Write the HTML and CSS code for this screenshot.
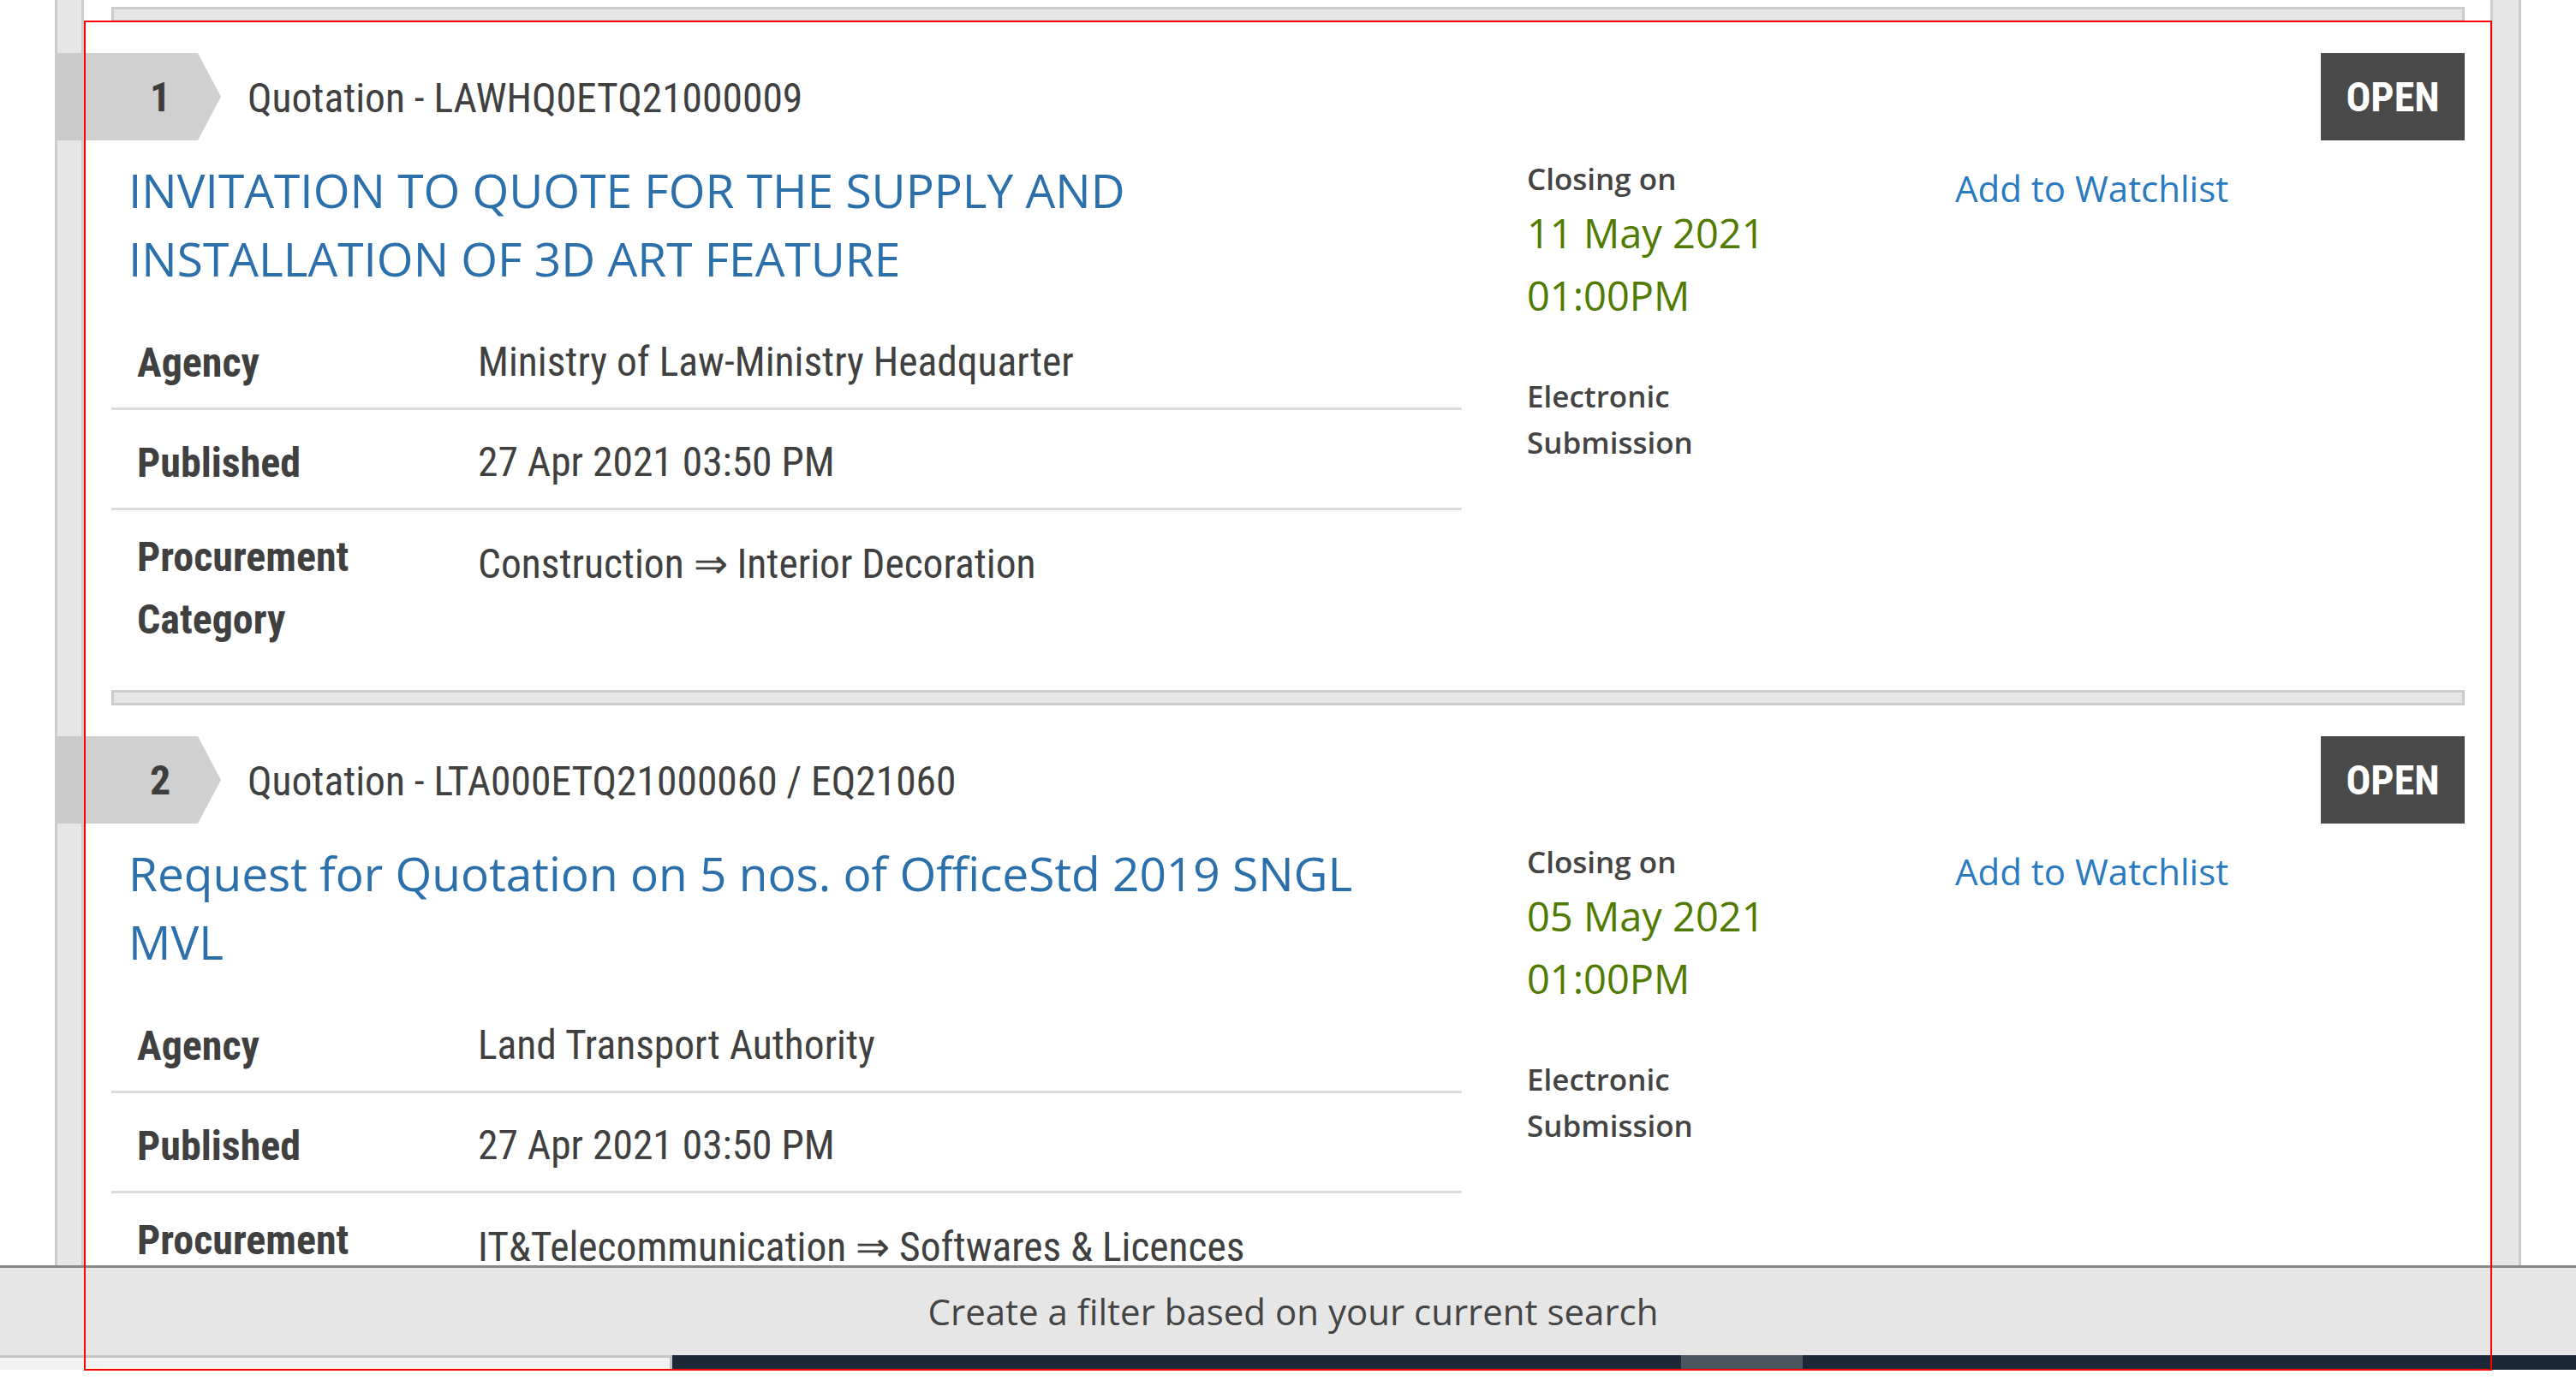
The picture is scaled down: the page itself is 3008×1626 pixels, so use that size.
FILE: index.html
```html
<!DOCTYPE html>
<html lang="en">
<head>
<meta charset="utf-8">
<title>Tender listing</title>
<link rel="stylesheet" href="styles.css">
</head>
<body>
<div class="frame">
  <div class="rail rail-left"></div>
  <main class="content">
    <div class="sep"></div>

    <article class="item">
      <div class="item-head">
        <div class="num-tab"><span>1</span></div>
        <div class="ref">Quotation - LAWHQ0ETQ21000009</div>
        <div class="status">OPEN</div>
      </div>
      <div class="item-body">
        <div class="main-col">
          <h2 class="title">INVITATION TO QUOTE FOR THE SUPPLY AND INSTALLATION OF 3D ART FEATURE</h2>
          <div class="row"><div class="lbl">Agency</div><div class="val">Ministry of Law-Ministry Headquarter</div></div>
          <div class="row"><div class="lbl">Published</div><div class="val">27 Apr 2021 03:50 PM</div></div>
          <div class="row row-last"><div class="lbl">Procurement Category</div><div class="val val-cat">Construction ⇒ Interior Decoration</div></div>
        </div>
        <div class="closing-col">
          <div class="closing-label">Closing on</div>
          <div class="closing-date">11 May 2021 01:00PM</div>
          <div class="submission">Electronic Submission</div>
        </div>
        <div class="watch-col"><a class="watch" href="#">Add to Watchlist</a></div>
      </div>
    </article>
    <div class="sep"></div>

    <article class="item">
      <div class="item-head">
        <div class="num-tab"><span>2</span></div>
        <div class="ref">Quotation - LTA000ETQ21000060 / EQ21060</div>
        <div class="status">OPEN</div>
      </div>
      <div class="item-body">
        <div class="main-col">
          <h2 class="title">Request for Quotation on 5 nos. of OfficeStd 2019 SNGL MVL</h2>
          <div class="row"><div class="lbl">Agency</div><div class="val">Land Transport Authority</div></div>
          <div class="row"><div class="lbl">Published</div><div class="val">27 Apr 2021 03:50 PM</div></div>
          <div class="row row-last"><div class="lbl">Procurement Category</div><div class="val val-cat">IT&amp;Telecommunication ⇒ Softwares &amp; Licences</div></div>
        </div>
        <div class="closing-col">
          <div class="closing-label">Closing on</div>
          <div class="closing-date">05 May 2021 01:00PM</div>
          <div class="submission">Electronic Submission</div>
        </div>
        <div class="watch-col"><a class="watch" href="#">Add to Watchlist</a></div>
      </div>
    </article>
    <div class="sep"></div>
  </main>
  <div class="rail rail-right"></div>
</div>

<footer class="footer">
  <div class="filter-bar">Create a filter based on your current search</div>
  <div class="strip">
    <div class="strip-left"></div>
    <div class="strip-dark"><div class="thumb"></div></div>
  </div>
  <div class="tail"></div>
</footer>

<div class="highlight"></div>
</body>
</html>
```

FILE: styles.css
```css
html, body {
  margin: 0;
  padding: 0;
  background: #fff;
  overflow: hidden;
}

body {
  font-family: "Open Sans", "Liberation Sans", sans-serif;
  color: #444;
}

.frame {
  display: flex;
  margin-left: 64px;
  width: 2880px;
}

.rail {
  box-sizing: border-box;
  flex: none;
  background: #e6e6e6;
  border-left: 3px solid #ccc;
  border-right: 3px solid #ccc;
}

.rail-left { width: 34px; }
.rail-right { width: 36px; }

.content {
  flex: 1;
  min-width: 0;
  padding: 8px 30px 0 32px;
}

.sep {
  box-sizing: border-box;
  height: 18px;
  border: 3px solid #ccc;
  background: #e6e6e6;
}

.item {
  padding: 36px 0 30px;
}

.item-head {
  display: flex;
  align-items: center;
  height: 102px;
}

.num-tab {
  flex: none;
  width: 193px;
  height: 102px;
  margin-left: -65px;
  background: linear-gradient(to right, #cbcbcb 0 33px, #d0d0d0 33px);
  clip-path: polygon(0 0, 166px 0, 193px 50%, 166px 100%, 0 100%);
  box-sizing: border-box;
  padding-left: 110px;
  padding-top: 2px;
  font-family: "Roboto Condensed", Roboto, sans-serif;
  font-stretch: condensed;
  font-weight: 700;
  font-size: 48px;
  line-height: 100px;
  color: #3d3d3d;
}

.ref {
  margin-left: 31px;
  padding-top: 3px;
  font-family: "Roboto Condensed", Roboto, sans-serif;
  font-stretch: condensed;
  font-size: 47.5px;
  line-height: 60px;
  color: #404040;
}

.status {
  margin-left: auto;
  width: 168px;
  height: 102px;
  box-sizing: border-box;
  padding-top: 2px;
  background: #4a4a4a;
  color: #fff;
  text-align: center;
  font-family: "Roboto Condensed", Roboto, sans-serif;
  font-stretch: condensed;
  font-weight: 700;
  font-size: 48px;
  line-height: 100px;
}

.item-body {
  display: grid;
  grid-template-columns: 1577px 576px 1fr;
  margin-top: 18px;
}

.title {
  margin: 0 0 20px;
  padding: 0 66px 0 20px;
  font-family: "Open Sans", sans-serif;
  font-weight: 400;
  font-size: 55px;
  line-height: 80px;
  color: #2b6fab;
}

.row {
  display: flex;
  padding: 25px 0 16px 30px;
  border-bottom: 3px solid #dcdcdc;
  font-family: "Roboto Condensed", Roboto, sans-serif;
  font-stretch: condensed;
  font-size: 47.5px;
  line-height: 73px;
  color: #404040;
}

.row-last {
  border-bottom: none;
  padding-top: 18px;
}

.lbl {
  flex: none;
  width: 398px;
  font-weight: 700;
  font-size: 48px;
}

.val {
  flex: 1;
}

.val-cat {
  padding-top: 9px;
}

.closing-col {
  padding: 0 170px 0 76px;
}

.closing-label,
.submission {
  font-weight: 600;
  font-size: 35px;
  line-height: 54px;
  color: #444;
}

.closing-date {
  font-size: 47px;
  line-height: 73px;
  color: #507a00;
}

.submission {
  margin-top: 54px;
}

.watch-col {
  padding-top: 6px;
}

.watch {
  font-size: 42px;
  line-height: 63px;
  color: #2a7abf;
  text-decoration: none;
}

.footer {
  position: fixed;
  left: 0;
  right: 0;
  bottom: 0;
  z-index: 5;
}

.filter-bar {
  height: 102px;
  border-top: 3px solid #888;
  background: #e6e6e6;
  text-align: center;
  font-size: 42px;
  line-height: 102px;
  padding-left: 12px;
  color: #444;
}

.strip {
  display: flex;
  height: 17px;
}

.strip-left {
  box-sizing: border-box;
  width: 785px;
  flex: none;
  background: #f2f2f2;
  border-top: 3px solid #c4c4c4;
  border-right: 3px solid #c4c4c4;
}

.strip-dark {
  flex: 1;
  background: #1c2838;
}

.thumb {
  width: 142px;
  height: 100%;
  margin-left: 1178px;
  background: #4a5560;
}

.tail {
  height: 26px;
  background: #fff;
}

.highlight {
  position: fixed;
  left: 98px;
  top: 24px;
  width: 2812px;
  height: 1577px;
  box-sizing: border-box;
  border: 2px solid #f00;
  pointer-events: none;
  z-index: 10;
}
```
